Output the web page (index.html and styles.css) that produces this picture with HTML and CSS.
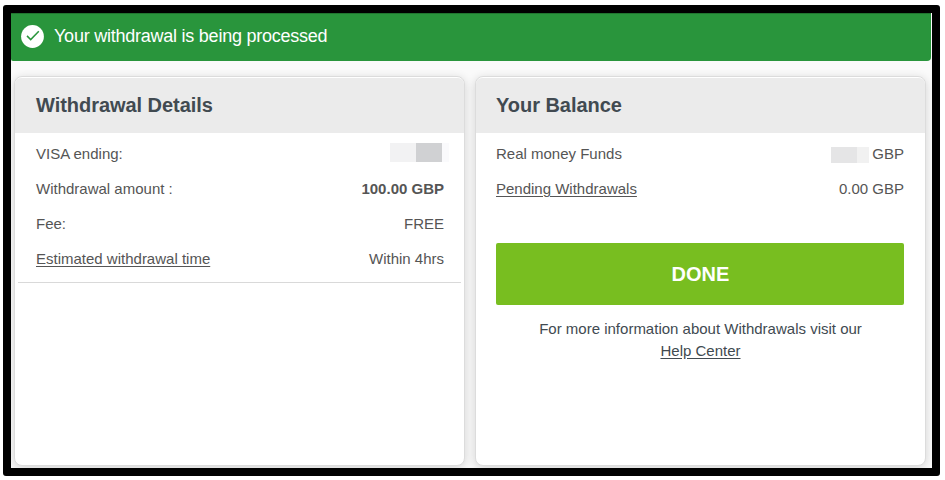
FILE: index.html
```html
<!DOCTYPE html>
<html lang="en">
<head>
  <meta charset="UTF-8">
  <meta name="viewport" content="width=device-width, initial-scale=1.0">
  <title>Withdrawal</title>
  <link rel="stylesheet" href="styles.css">
</head>
<body>
  <div class="frame">
    <div class="notice">
      <svg class="check" viewBox="0 0 23 23" width="23" height="23">
        <circle cx="11.5" cy="11.5" r="11.4" fill="#fff" />
        <path d="M6 10.9l3.7 3.7L17.8 6.2" fill="none" stroke="#29953c" stroke-width="1.5" />
      </svg>
      <span>Your withdrawal is being processed</span>
    </div>

    <div class="cards">
      <section class="card">
        <h2>Withdrawal Details</h2>
        <ul class="rows divided">
          <li><span>VISA ending:</span><span class="hidden-card"></span></li>
          <li><span>Withdrawal amount :</span><b>100.00 GBP</b></li>
          <li><span>Fee:</span><span>FREE</span></li>
          <li><a href="#">Estimated withdrawal time</a><span>Within 4hrs</span></li>
        </ul>
      </section>

      <section class="card balance">
        <h2>Your Balance</h2>
        <ul class="rows">
          <li><span>Real money Funds</span><span class="amount"><i class="hidden-amount"></i>GBP</span></li>
          <li><a href="#">Pending Withdrawals</a><span>0.00 GBP</span></li>
        </ul>
        <button class="done">DONE</button>
        <p class="help">For more information about Withdrawals visit our<br><a href="#">Help Center</a></p>
      </section>
    </div>
  </div>
</body>
</html>
```

FILE: styles.css
```css
* {
  box-sizing: border-box;
}

body {
  margin: 0;
  padding: 5px 0 0 3px;
  background: #fff;
  color: #555555;
  font-family: Arial, "Liberation Sans", sans-serif;
  font-size: 15px;
}

.frame {
  width: 937px;
  height: 471px;
  border: 8px solid #000;
  border-radius: 3px;
  background: #fafafa;
  overflow: hidden;
}

.notice {
  display: flex;
  align-items: center;
  gap: 10px;
  width: 920px;
  height: 48px;
  padding: 0 10px 2px;
  border-radius: 0 0 4px 2px;
  background: #29953c;
  box-shadow: inset 0 1px #217530;
  color: #fff;
  font-size: 18px;
  letter-spacing: -.24px;
}

.cards {
  display: flex;
  gap: 10px;
  padding: 15px 0 0 3px;
}

.card {
  width: 451px;
  height: 390px;
  border: 1px solid #dcdcdc;
  border-radius: 8px;
  background: #fff;
  box-shadow: 0 2px 10px rgba(0, 0, 0, .16);
}

.card h2 {
  height: 55px;
  margin: 1px 0 0;
  padding-left: 21px;
  border-radius: 6px 6px 0 0;
  background: #ebebeb;
  color: #414a51;
  font-size: 20px;
  line-height: 55px;
  letter-spacing: -.04px;
}

.balance h2 {
  padding-left: 20px;
}

.rows {
  list-style: none;
  margin: 0 3px;
  padding: 3px 17px 0 18px;
}

.balance .rows {
  padding: 3px 18px 1px 17px;
}

.divided {
  height: 150px;
  border-bottom: 1px solid #d9d9d9;
}

.rows li {
  display: flex;
  justify-content: space-between;
  align-items: center;
  height: 35px;
}

a {
  color: inherit;
  text-underline-offset: 2px;
}

/* masked values */
.hidden-card {
  width: 59px;
  height: 19px;
  margin: 0 -5px 2px 0;
  background: linear-gradient(90deg, #f2f2f3 26px, #d0d1d3 26px 52px, #fafafc 52px);
}

.amount {
  display: flex;
  align-items: center;
}

.hidden-amount {
  width: 38px;
  height: 16px;
  margin: 2px 3px 0 0;
  background: linear-gradient(90deg, #e5e5e6 26px, #f1f1f1 26px);
}

.done {
  display: block;
  width: 408px;
  height: 62px;
  margin: 36px 0 0 20px;
  padding: 0 0 0 1px;
  border: 0;
  border-radius: 2px;
  background: #78be20;
  color: #fff;
  font: bold 20px Arial, "Liberation Sans", sans-serif;
}

.help {
  margin: 13px 0 0;
  color: #414a51;
  line-height: 22px;
  text-align: center;
}
```
